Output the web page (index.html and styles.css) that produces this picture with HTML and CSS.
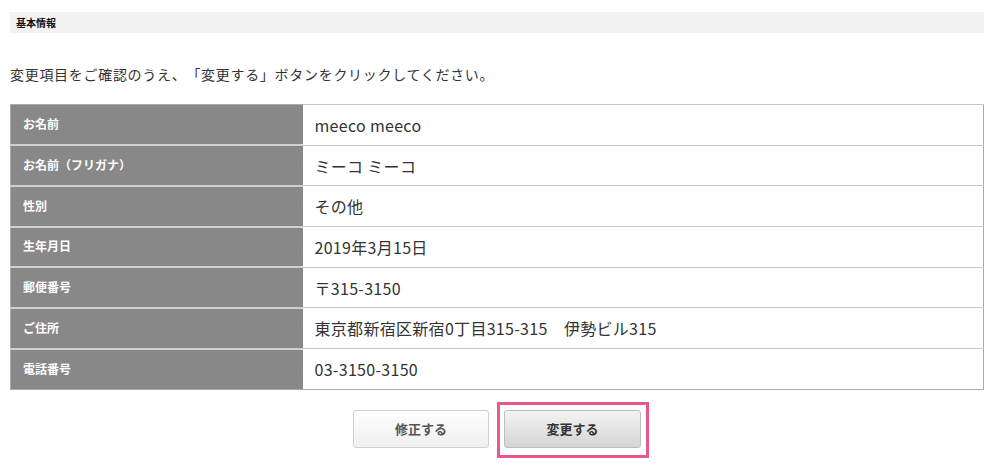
FILE: index.html
```html
<!DOCTYPE html>
<html lang="ja">
<head>
<meta charset="utf-8">
<title>基本情報</title>
<link rel="stylesheet" href="styles.css">
</head>
<body>
<div class="page">
  <div class="section-head">基本情報</div>
  <p class="lead">変更項目をご確認のうえ、「変更する」ボタンをクリックしてください。</p>
  <table class="info">
    <tr><th>お名前</th><td>meeco meeco</td></tr>
    <tr><th>お名前（フリガナ）</th><td>ミーコ ミーコ</td></tr>
    <tr><th>性別</th><td>その他</td></tr>
    <tr><th>生年月日</th><td>2019年3月15日</td></tr>
    <tr><th>郵便番号</th><td>〒315-3150</td></tr>
    <tr><th>ご住所</th><td>東京都新宿区新宿0丁目315-315　伊勢ビル315</td></tr>
    <tr><th>電話番号</th><td>03-3150-3150</td></tr>
  </table>
  <div class="actions">
    <button class="btn btn-back">修正する</button>
    <button class="btn btn-submit">変更する</button>
  </div>
</div>
</body>
</html>
```

FILE: styles.css
```css
html, body {
  margin: 0;
  padding: 0;
  background: #fff;
}
body {
  min-height: 466px;
  font-family: "Noto Sans CJK JP", "Noto Sans", sans-serif;
  color: #333;
  text-spacing-trim: space-all;
}
.page {
  width: 974px;
  padding: 12px 0 0 10px;
}
.section-head {
  background: #f2f2f2;
  height: 21px;
  line-height: 21px;
  padding-left: 6px;
  font-size: 10px;
  font-weight: bold;
  color: #111;
}
.lead {
  margin: 31px 0 0;
  font-size: 14px;
  line-height: 20px;
  letter-spacing: 0.7px;
  color: #333;
}
.info {
  margin-top: 20px;
  width: 974px;
  border-collapse: collapse;
  border: 1px solid #aaa;
}
.info th,
.info td {
  height: 40.7px;
  padding: 0 12px;
  border-top: 1px solid #c8c8c8;
  box-sizing: border-box;
  vertical-align: middle;
  text-align: left;
}
.info th {
  width: 292px;
  background: #888;
  color: #fff;
  font-size: 12px;
  font-weight: bold;
  border-top: 2px solid #d0d0d0;
  padding-bottom: 2px;
}
.info tr:first-child th {
  border-top: 1px solid #aaa;
}
.info td {
  background: #fff;
  font-size: 16px;
  letter-spacing: 0.3px;
  color: #333;
}
.actions {
  display: flex;
  justify-content: center;
  gap: 15px;
  margin-top: 20px;
}
.btn {
  width: 136px;
  height: 38px;
  border-radius: 3px;
  font-family: "Noto Sans CJK JP", "Noto Sans", sans-serif;
  font-size: 13px;
  font-weight: bold;
  cursor: pointer;
}
.btn-back {
  background: linear-gradient(#ffffff, #efefef);
  border: 1px solid #d0d0d0;
  color: #555;
}
.btn-submit {
  position: relative;
  width: 137px;
  background: linear-gradient(#f4f4f4, #d4d4d4);
  border: 1px solid #bdbdbd;
  color: #333;
}
.btn-submit::after {
  content: "";
  position: absolute;
  left: -8px;
  right: -9px;
  top: -9px;
  bottom: -11px;
  border: 3px solid #e8578a;
  pointer-events: none;
}
```
